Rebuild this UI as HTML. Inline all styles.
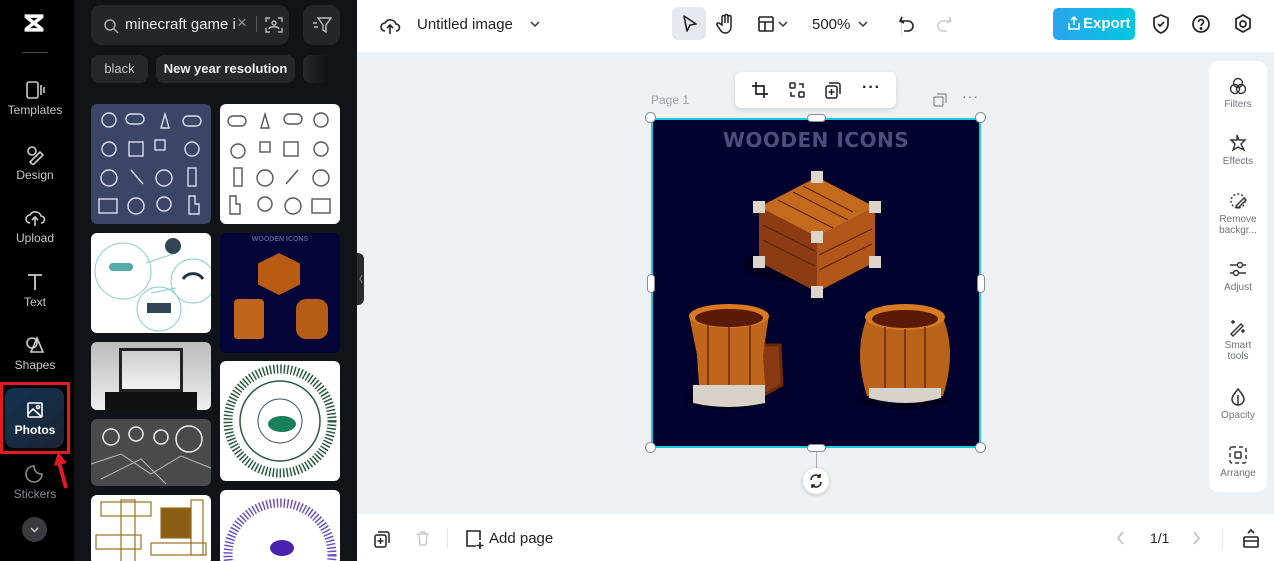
<!DOCTYPE html>
<html><head><meta charset="utf-8"><style>
*{box-sizing:border-box;margin:0;padding:0}
html,body{width:1274px;height:561px;overflow:hidden}
body{font-family:"Liberation Sans",sans-serif;background:#eef1f4;position:relative}
.abs{position:absolute}
#nav{left:0;top:0;width:74px;height:561px;background:#000;overflow:hidden}
.ni{position:absolute;left:0;width:70px;text-align:center;color:#c9c9cc;font-size:12px}
.ni svg{display:block;margin:0 auto 3px}
#panel{left:74px;top:0;width:283px;height:561px;background:#121316;overflow:hidden}
.th{position:absolute;border-radius:6px;overflow:hidden}
#top{left:357px;top:0;width:917px;height:52px;background:#fff}
#bot{left:357px;top:514px;width:917px;height:47px;background:#fff}
.rt{position:absolute;left:0;width:58px;text-align:center;font-size:10px;color:#70737a;line-height:11px}
.rt svg{display:block;margin:0 auto 3px}
.h{position:absolute;width:11px;height:11px;border-radius:50%;background:#fff;border:1px solid #8a8f96}
</style></head><body>
<div id="nav" class="abs">
 <svg class="abs" style="left:22px;top:13px" width="24" height="20" viewBox="0 0 28 22"><path d="M3 3h22M3 19h22M5 4l18 14M23 4L5 18" stroke="#fff" stroke-width="4" fill="none"/></svg>
 <div class="abs" style="left:22px;top:52px;width:26px;height:1px;background:#444"></div>
 <div class="ni" style="top:80px"><svg width="22" height="20" viewBox="0 0 22 20" fill="none" stroke="#ccc" stroke-width="1.6"><rect x="3" y="2" width="11" height="16" rx="2"/><path d="M17 5v10M20 7v6"/></svg>Templates</div>
 <div class="ni" style="top:145px"><svg width="22" height="20" viewBox="0 0 22 20" fill="none" stroke="#ccc" stroke-width="1.6"><circle cx="8" cy="6" r="4"/><path d="M6 17l10-10 3 3-10 10z"/></svg>Design</div>
 <div class="ni" style="top:208px"><svg width="22" height="20" viewBox="0 0 22 20" fill="none" stroke="#ccc" stroke-width="1.6"><path d="M6 15a4 4 0 010-8 6 6 0 0111 1 3.5 3.5 0 010 7M11 18v-8M8 12l3-3 3 3"/></svg>Upload</div>
 <div class="ni" style="top:272px"><svg width="22" height="20" viewBox="0 0 22 20" fill="none" stroke="#ccc" stroke-width="1.8"><path d="M4 3h14M11 3v15"/></svg>Text</div>
 <div class="ni" style="top:335px"><svg width="22" height="20" viewBox="0 0 22 20" fill="none" stroke="#ccc" stroke-width="1.6"><circle cx="8" cy="8" r="5"/><path d="M13 3l6 14H7z"/></svg>Shapes</div>
 <div class="abs" style="left:0;top:382px;width:70px;height:72px;border:3px solid #e01b24"></div>
 <div class="abs" style="left:5px;top:388px;width:59px;height:60px;border-radius:9px;background:linear-gradient(135deg,#123352,#1b2432)"></div>
 <div class="ni" style="top:400px;color:#fff;font-weight:bold"><svg width="22" height="20" viewBox="0 0 22 20" fill="none" stroke="#fff" stroke-width="1.6"><rect x="4" y="3" width="14" height="14" rx="1"/><path d="M4 14l5-5 9 8"/><circle cx="14" cy="7" r="1.5"/></svg>Photos</div>
 <svg class="abs" style="left:52px;top:452px" width="18" height="38" viewBox="0 0 18 38"><path d="M14 36L7 10" stroke="#e01b24" stroke-width="4"/><path d="M2 14L6 0l9 11z" fill="#e01b24"/></svg>
 <div class="ni" style="top:464px;color:#8a8a8f"><svg width="22" height="20" viewBox="0 0 22 20" fill="none" stroke="#8a8a8f" stroke-width="1.6"><path d="M18 10a8 8 0 11-8-8c0 5 3 8 8 8z"/></svg>Stickers</div>
 <div class="abs" style="left:22px;top:517px;width:25px;height:25px;border-radius:50%;background:#3a3b3f"><svg width="25" height="25" viewBox="0 0 25 25"><path d="M9 11l3.5 3.5L16 11" stroke="#ccc" stroke-width="1.5" fill="none"/></svg></div>
</div>
<div id="panel" class="abs">
 <div class="abs" style="left:17px;top:5px;width:198px;height:40px;border-radius:10px;background:#25262a">
  <svg class="abs" style="left:12px;top:13px" width="16" height="16" viewBox="0 0 16 16" fill="none" stroke="#aaa" stroke-width="1.5"><circle cx="7" cy="7" r="5"/><path d="M11 11l4 4"/></svg>
  <span class="abs" style="left:34px;top:11px;color:#e8e8ea;font-size:15px;white-space:nowrap">minecraft game i</span>
  <span class="abs" style="left:146px;top:8px;color:#999;font-size:17px">×</span>
  <span class="abs" style="left:165px;top:11px;width:1px;height:16px;background:#555"></span>
  <svg class="abs" style="left:174px;top:12px" width="18" height="16" viewBox="0 0 18 16" fill="none" stroke="#bbb" stroke-width="1.4"><path d="M1 5V1h4M13 1h4v4M17 11v4h-4M5 15H1v-4"/><circle cx="9" cy="6" r="2"/><path d="M4 12c1-3 9-3 10 0"/></svg>
 </div>
 <div class="abs" style="left:229px;top:5px;width:37px;height:40px;border-radius:10px;background:#25262a"><svg style="margin:11px 0 0 9px" width="20" height="18" viewBox="0 0 20 18" fill="none" stroke="#bbb" stroke-width="1.4"><path d="M6 2h13l-5 7v7l-3-2V9zM1 7h4M2 11h4"/></svg></div>
 <div class="abs" style="left:17px;top:55px;width:57px;height:28px;border-radius:8px;background:#26272b;color:#c8c8cb;font-size:13px;text-align:center;line-height:28px">black</div>
 <div class="abs" style="left:82px;top:55px;width:139px;height:28px;border-radius:8px;background:#26272b;color:#f0f0f2;font-size:13px;font-weight:bold;text-align:center;line-height:28px">New year resolution</div>
 <div class="abs" style="left:229px;top:55px;width:25px;height:28px;border-radius:8px 0 0 8px;background:linear-gradient(90deg,#26272b,#121316)"></div>
 <div class="th" style="left:17px;top:104px;width:120px;height:120px;background:#3b4566"></div>
 <div class="th" style="left:146px;top:104px;width:120px;height:120px;background:#fff"></div>
 <svg class="abs" style="left:17px;top:104px" width="250" height="120"><g fill="none" stroke="#dde" stroke-width="1.4"><circle cx="18" cy="16" r="7"/><rect x="35" y="10" width="18" height="10" rx="5"/><path d="M70 24l4-14 4 14z"/><rect x="92" y="12" width="18" height="10" rx="5"/><circle cx="18" cy="45" r="7"/><rect x="38" y="38" width="14" height="14"/><rect x="64" y="36" width="10" height="10"/><circle cx="101" cy="45" r="7"/><circle cx="18" cy="74" r="8"/><path d="M40 66l12 14"/><circle cx="73" cy="74" r="8"/><rect x="97" y="64" width="8" height="18"/><rect x="8" y="95" width="18" height="14"/><circle cx="45" cy="102" r="8"/><circle cx="73" cy="100" r="7"/><path d="M98 92h6v8h4v10h-10z"/></g><g fill="none" stroke="#555" stroke-width="1.4" transform="translate(129,0)"><rect x="8" y="12" width="18" height="10" rx="5"/><path d="M41 24l4-14 4 14z"/><rect x="64" y="10" width="18" height="10" rx="5"/><circle cx="101" cy="16" r="7"/><circle cx="18" cy="47" r="7"/><rect x="40" y="38" width="10" height="10"/><rect x="64" y="38" width="14" height="14"/><circle cx="101" cy="45" r="7"/><rect x="14" y="64" width="8" height="18"/><circle cx="45" cy="74" r="8"/><path d="M66 80l12-14"/><circle cx="101" cy="74" r="8"/><path d="M10 92h6v8h4v10H10z"/><circle cx="45" cy="100" r="7"/><circle cx="73" cy="102" r="8"/><rect x="92" y="95" width="18" height="14"/></g></svg>
 <div class="th" style="left:17px;top:233px;width:120px;height:100px;background:#fff"><svg width="120" height="100"><g fill="none" stroke="#8cc" stroke-width="1"><circle cx="32" cy="38" r="28"/><circle cx="102" cy="48" r="22"/><circle cx="68" cy="76" r="22"/><path d="M55 30l30-10M60 60l25-5"/></g><circle cx="82" cy="13" r="8" fill="#345"/><path d="M56 70h24v10H56z" fill="#345"/><path d="M92 46a12 12 0 0120 0" stroke="#234" stroke-width="3" fill="none"/><rect x="18" y="30" width="24" height="8" fill="#5aa" rx="4"/></svg></div>
 <div class="th" style="left:146px;top:233px;width:120px;height:120px;background:#05053a"><div style="color:#5a5c88;font-size:7px;font-weight:bold;text-align:center;margin-top:3px">WOODEN ICONS</div><div class="abs" style="left:38px;top:20px;width:42px;height:42px;background:#b85c14;clip-path:polygon(50% 0,100% 25%,100% 75%,50% 100%,0 75%,0 25%)"></div><div class="abs" style="left:14px;top:66px;width:30px;height:40px;background:#c0661a;border-radius:4px 4px 3px 3px"></div><div class="abs" style="left:76px;top:66px;width:32px;height:40px;background:#b35d17;border-radius:10px"></div></div>
 <div class="th" style="left:17px;top:342px;width:120px;height:68px;background:linear-gradient(#bbb,#eee)"><div class="abs" style="left:28px;top:6px;width:64px;height:44px;background:#222"></div><div class="abs" style="left:31px;top:9px;width:58px;height:38px;background:linear-gradient(#ccc,#f2f2f2)"></div><div class="abs" style="left:14px;top:50px;width:92px;height:18px;background:#111"></div></div>
 <div class="th" style="left:17px;top:419px;width:120px;height:67px;background:#4a4a4a"><svg width="120" height="67" fill="none" stroke="#eee" stroke-width="1.5"><circle cx="20" cy="18" r="8"/><circle cx="45" cy="15" r="7"/><circle cx="70" cy="18" r="7"/><circle cx="98" cy="20" r="13"/><path d="M0 45l30-10 30 20 30-18 30 12M10 60l40-20 25 25" stroke="#bbb" stroke-width="1"/></svg></div>
 <div class="th" style="left:17px;top:495px;width:120px;height:70px;background:#fff"><svg width="120" height="70" fill="none" stroke="#9a7024" stroke-width="1.2"><rect x="10" y="7" width="50" height="14"/><rect x="70" y="13" width="30" height="30" fill="#8a5e14"/><rect x="5" y="40" width="45" height="14"/><rect x="30" y="5" width="14" height="65"/><rect x="100" y="5" width="12" height="55"/><rect x="60" y="48" width="55" height="12"/></svg></div>
 <div class="th" style="left:146px;top:361px;width:120px;height:120px;background:#fff"><svg width="120" height="120"><circle cx="60" cy="60" r="52" fill="none" stroke="#2a5a40" stroke-width="9" stroke-dasharray="1.5 2"/><circle cx="60" cy="60" r="40" fill="none" stroke="#2a5a40" stroke-width="1.5"/><circle cx="60" cy="60" r="22" fill="#fff" stroke="#456" stroke-width="1"/><ellipse cx="62" cy="63" rx="14" ry="8" fill="#18805a"/></svg></div>
 <div class="th" style="left:146px;top:490px;width:120px;height:75px;background:#fff"><svg width="120" height="75"><circle cx="60" cy="65" r="52" fill="none" stroke="#6b52b8" stroke-width="9" stroke-dasharray="1.5 2"/><circle cx="60" cy="65" r="22" fill="#fff"/><ellipse cx="62" cy="58" rx="12" ry="8" fill="#4a22b0"/></svg></div>
</div>
<div class="abs" style="left:357px;top:253px;width:7px;height:52px;background:#2a2b2e;border-radius:0 6px 6px 0"><svg width="7" height="52"><path d="M5 22l-2 4 2 4" stroke="#888" fill="none"/></svg></div>
<div id="top" class="abs">
 <svg class="abs" style="left:22px;top:14px" width="22" height="22" viewBox="0 0 22 22" fill="none" stroke="#222" stroke-width="1.6"><path d="M6 17a4 4 0 010-8 6 6 0 0111 1 3.5 3.5 0 010 7M11 20v-8M8 14l3-3 3 3"/></svg>
 <span class="abs" style="left:60px;top:16px;font-size:15px;color:#222">Untitled image</span>
 <svg class="abs" style="left:172px;top:19px" width="12" height="10"><path d="M2 3l4 4 4-4" stroke="#333" stroke-width="1.5" fill="none"/></svg>
 <div class="abs" style="left:315px;top:7px;width:34px;height:33px;border-radius:6px;background:#e5e8ec"></div>
 <svg class="abs" style="left:324px;top:14px" width="18" height="20" viewBox="0 0 18 20"><path d="M3 2l12 8-6 1-3 6z" fill="none" stroke="#222" stroke-width="1.6" stroke-linejoin="round"/></svg>
 <svg class="abs" style="left:359px;top:13px" width="20" height="22" viewBox="0 0 20 22" fill="none" stroke="#222" stroke-width="1.5"><path d="M6 12V4a1.5 1.5 0 013 0v6V3a1.5 1.5 0 013 0v7V4a1.5 1.5 0 013 0v9c0 4-2 7-6 7-3 0-4-2-6-5l-2-3a1.5 1.5 0 012-2z"/></svg>
 <svg class="abs" style="left:400px;top:15px" width="18" height="18" viewBox="0 0 18 18" fill="none" stroke="#222" stroke-width="1.6"><rect x="2" y="2" width="14" height="14" rx="1"/><path d="M2 7h14M8 7v9"/></svg>
 <svg class="abs" style="left:420px;top:19px" width="12" height="10"><path d="M2 3l4 4 4-4" stroke="#333" stroke-width="1.5" fill="none"/></svg>
 <span class="abs" style="left:455px;top:16px;font-size:15px;color:#222">500%</span>
 <svg class="abs" style="left:500px;top:19px" width="12" height="10"><path d="M2 3l4 4 4-4" stroke="#333" stroke-width="1.5" fill="none"/></svg>
 <div class="abs" style="left:544px;top:15px;width:1px;height:20px;background:#ddd"></div>
 <svg class="abs" style="left:541px;top:14px" width="18" height="20" viewBox="0 0 18 20" fill="none" stroke="#222" stroke-width="1.6"><path d="M4 3L2 7l4 2M2 7h8a5 5 0 010 10H6"/></svg>
 <svg class="abs" style="left:578px;top:14px" width="18" height="20" viewBox="0 0 18 20" fill="none" stroke="#ccc" stroke-width="1.6"><path d="M14 3l2 4-4 2M16 7H8a5 5 0 000 10h4"/></svg>
 <div class="abs" style="left:696px;top:8px;width:82px;height:32px;border-radius:5px;background:linear-gradient(90deg,#2aa5ee,#00c7e0);color:#fff;font-size:15px;font-weight:bold;line-height:32px;padding-left:30px">Export</div>
 <svg class="abs" style="left:710px;top:15px" width="14" height="16" viewBox="0 0 14 16" fill="none" stroke="#fff" stroke-width="1.5"><path d="M7 10V2M4 5l3-3 3 3M2 8v6h10V8"/></svg>
 <svg class="abs" style="left:794px;top:13px" width="20" height="22" viewBox="0 0 20 22" fill="none" stroke="#222" stroke-width="1.7"><path d="M10 2l7 3v6c0 5-4 8-7 9-3-1-7-4-7-9V5z"/><path d="M7 11l2 2 4-4"/></svg>
 <svg class="abs" style="left:834px;top:14px" width="20" height="20" viewBox="0 0 20 20" fill="none" stroke="#222" stroke-width="1.7"><circle cx="10" cy="10" r="8"/><path d="M7.5 8a2.5 2.5 0 115 0c0 2-2.5 2-2.5 4"/><circle cx="10" cy="14.5" r=".6" fill="#222"/></svg>
 <svg class="abs" style="left:876px;top:13px" width="20" height="22" viewBox="0 0 20 22" fill="none" stroke="#222" stroke-width="1.7"><path d="M10 2l7 4v9l-7 4-7-4V6z"/><circle cx="10" cy="11" r="3"/></svg>
</div>
<span class="abs" style="left:651px;top:93px;font-size:12px;color:#9aa0a6">Page 1</span>
<svg class="abs" style="left:933px;top:93px" width="14" height="14" viewBox="0 0 14 14" fill="none" stroke="#888" stroke-width="1.2"><rect x="1" y="4" width="9" height="9" rx="1"/><path d="M4 1h9v9"/></svg>
<span class="abs" style="left:962px;top:88px;font-size:14px;color:#777;letter-spacing:1px">···</span>
<div class="abs" style="left:735px;top:72px;width:161px;height:36px;border-radius:7px;background:#fff;box-shadow:0 2px 6px rgba(0,0,0,.12)">
 <svg class="abs" style="left:16px;top:9px" width="18" height="18" viewBox="0 0 18 18" fill="none" stroke="#222" stroke-width="1.7"><path d="M5 1v12h12M1 5h12v12"/></svg>
 <svg class="abs" style="left:53px;top:9px" width="18" height="18" viewBox="0 0 18 18" fill="none" stroke="#222" stroke-width="1.5"><rect x="2" y="2" width="5" height="5" rx="1"/><rect x="11" y="11" width="5" height="5" rx="1"/><path d="M11 3h4v4M7 15H3v-4"/></svg>
 <svg class="abs" style="left:89px;top:9px" width="18" height="18" viewBox="0 0 18 18" fill="none" stroke="#222" stroke-width="1.5"><rect x="2" y="5" width="11" height="12" rx="2"/><path d="M5 2h9a2 2 0 012 2v9M7.5 8v6M4.5 11h6"/></svg>
 <span class="abs" style="left:127px;top:7px;font-size:16px;color:#222;font-weight:bold;letter-spacing:1px">···</span>
</div>
<div class="abs" style="left:651px;top:118px;width:330px;height:330px;background:#03012e;border:2px solid #1fc7dc;overflow:hidden">
 <div style="text-align:center;color:#4d4e7c;font-size:20px;font-weight:bold;margin-top:8px;letter-spacing:.5px;font-family:'DejaVu Sans',sans-serif">WOODEN ICONS</div>
 <svg class="abs" style="left:0;top:0" width="330" height="330">
  <ellipse cx="150" cy="145" rx="60" ry="18" fill="#00001c"/>
  <polygon points="164,57 222,87 164,117 106,87" fill="#c46a1c"/>
  <polygon points="106,87 164,117 164,172 106,142" fill="#8d3b14"/>
  <polygon points="164,117 222,87 222,142 164,172" fill="#b3561a"/>
  <g stroke="#5a2508" stroke-width="1.2"><path d="M125 80l55 28M140 72l55 28M150 66l50 26M110 105l52 26M110 120l52 26M166 135l53-26M166 150l53-26"/></g>
  <g fill="#ddd5cc"><rect x="158" y="51" width="12" height="12"/><rect x="100" y="81" width="12" height="12"/><rect x="216" y="81" width="12" height="12"/><rect x="158" y="111" width="12" height="12"/><rect x="100" y="136" width="12" height="12"/><rect x="216" y="136" width="12" height="12"/><rect x="158" y="166" width="12" height="12"/></g>
  <ellipse cx="73" cy="280" rx="40" ry="9" fill="#00001c"/>
  <path d="M103 225h24l2 40-18 10-4-10" fill="#8a3a12" stroke="#6a2a0a" stroke-width="3"/>
  <path d="M36 195h80l-6 40 2 30H46l-2-30z" fill="#c0661a"/>
  <ellipse cx="76" cy="196" rx="40" ry="12" fill="#d87a1f"/><ellipse cx="76" cy="198" rx="34" ry="9" fill="#5a1a08"/>
  <g stroke="#6a2a0a" stroke-width="1.5"><path d="M55 205v60M76 207v58M97 205v60"/></g>
  <path d="M40 265h72v18q-36 8-72 0z" fill="#d8d2c8"/>
  <ellipse cx="250" cy="280" rx="44" ry="9" fill="#00001c"/>
  <path d="M214 198q-14 34 0 78h76q14-44 0-78z" fill="#b8621a"/>
  <ellipse cx="252" cy="197" rx="40" ry="13" fill="#d87a1f"/><ellipse cx="252" cy="199" rx="33" ry="9" fill="#5a1a08"/>
  <g stroke="#6a2a0a" stroke-width="1.5"><path d="M232 207v65M252 209v63M272 207v65"/></g>
  <path d="M216 268h72v10q-36 10-72 0z" fill="#d8d2c8"/>
 </svg>
</div>
<div class="h" style="left:645px;top:112px"></div><div class="h" style="left:975px;top:112px"></div>
<div class="h" style="left:645px;top:442px"></div><div class="h" style="left:975px;top:442px"></div>
<div class="abs" style="left:807px;top:114px;width:19px;height:8px;border-radius:4px;background:#fff;border:1px solid #8a8f96"></div>
<div class="abs" style="left:807px;top:444px;width:19px;height:8px;border-radius:4px;background:#fff;border:1px solid #8a8f96"></div>
<div class="abs" style="left:647px;top:274px;width:8px;height:19px;border-radius:4px;background:#fff;border:1px solid #8a8f96"></div>
<div class="abs" style="left:977px;top:274px;width:8px;height:19px;border-radius:4px;background:#fff;border:1px solid #8a8f96"></div>
<div class="abs" style="left:816px;top:452px;width:1px;height:17px;background:#aab"></div>
<div class="abs" style="left:803px;top:468px;width:26px;height:26px;border-radius:50%;background:#fff;box-shadow:0 1px 4px rgba(0,0,0,.2)"><svg width="26" height="26" viewBox="0 0 26 26" fill="none" stroke="#222" stroke-width="1.6"><path d="M8 12a5 5 0 019-3M18 14a5 5 0 01-9 3M17 6v3h-3M9 20v-3h3"/></svg></div>
<div class="abs" style="left:1209px;top:61px;width:58px;height:431px;border-radius:10px;background:#fff">
 <div class="rt" style="top:15px"><svg width="20" height="20" viewBox="0 0 20 20" fill="none" stroke="#333" stroke-width="1.4"><circle cx="10" cy="7" r="4.5"/><circle cx="7" cy="13" r="4.5"/><circle cx="13" cy="13" r="4.5"/></svg>Filters</div>
 <div class="rt" style="top:72px"><svg width="20" height="20" viewBox="0 0 20 20" fill="none" stroke="#333" stroke-width="1.4"><path d="M9 2l2 5 6 0-4 4 3 6-6-3-5 3 2-6-4-4 6 0z"/></svg>Effects</div>
 <div class="rt" style="top:130px"><svg width="20" height="20" viewBox="0 0 20 20" fill="none" stroke="#333" stroke-width="1.4"><circle cx="10" cy="10" r="7" stroke-dasharray="2 2"/><path d="M8 15l8-8 2 2-8 8z"/></svg>Remove<br>backgr...</div>
 <div class="rt" style="top:198px"><svg width="20" height="20" viewBox="0 0 20 20" fill="none" stroke="#333" stroke-width="1.4"><path d="M2 6h16M2 14h16"/><circle cx="12" cy="6" r="2.5" fill="#fff"/><circle cx="8" cy="14" r="2.5" fill="#fff"/></svg>Adjust</div>
 <div class="rt" style="top:256px"><svg width="20" height="20" viewBox="0 0 20 20" fill="none" stroke="#333" stroke-width="1.4"><path d="M3 17l10-10 2 2L5 19zM5 3v4M3 5h4M15 12v4M13 14h4"/></svg>Smart<br>tools</div>
 <div class="rt" style="top:326px"><svg width="20" height="20" viewBox="0 0 20 20" fill="none" stroke="#333" stroke-width="1.5"><path d="M10 2c3 4 6 7 6 10a6 6 0 01-12 0c0-3 3-6 6-10z"/><path d="M10 8v10"/></svg>Opacity</div>
 <div class="rt" style="top:384px"><svg width="20" height="20" viewBox="0 0 20 20" fill="none" stroke="#333" stroke-width="1.5"><rect x="2" y="2" width="16" height="16" rx="2" stroke-dasharray="4 3"/><rect x="7" y="7" width="6" height="6" rx="1"/></svg>Arrange</div>
</div>
<div id="bot" class="abs">
 <svg class="abs" style="left:16px;top:16px" width="18" height="18" viewBox="0 0 18 18" fill="none" stroke="#222" stroke-width="1.5"><rect x="2" y="5" width="11" height="12" rx="2"/><path d="M5 2h9a2 2 0 012 2v9M7.5 8v6M4.5 11h6"/></svg>
 <svg class="abs" style="left:57px;top:15px" width="18" height="18" viewBox="0 0 18 18" fill="none" stroke="#ccc" stroke-width="1.5"><path d="M3 5h12M7 5V3h4v2M5 5l1 11h6l1-11"/></svg>
 <div class="abs" style="left:90px;top:14px;width:1px;height:20px;background:#e5e5e5"></div>
 <svg class="abs" style="left:107px;top:14px" width="20" height="22" viewBox="0 0 20 22" fill="none" stroke="#222" stroke-width="1.6"><path d="M12 18H3V3h13v9"/><path d="M16 14v7M12.5 17.5h7"/></svg>
 <span class="abs" style="left:132px;top:16px;font-size:15px;color:#222">Add page</span>
 <svg class="abs" style="left:758px;top:16px" width="12" height="16"><path d="M8 2L3 8l5 6" stroke="#bbb" stroke-width="1.5" fill="none"/></svg>
 <span class="abs" style="left:793px;top:16px;font-size:14px;color:#222">1/1</span>
 <svg class="abs" style="left:833px;top:16px" width="12" height="16"><path d="M4 2l5 6-5 6" stroke="#bbb" stroke-width="1.5" fill="none"/></svg>
 <div class="abs" style="left:865px;top:14px;width:1px;height:20px;background:#e5e5e5"></div>
 <svg class="abs" style="left:885px;top:13px" width="18" height="22" viewBox="0 0 18 22" fill="none" stroke="#222" stroke-width="1.6"><rect x="2" y="10" width="14" height="10" rx="1"/><path d="M2 14h14M6 6l3-3 3 3"/></svg>
</div>
</body></html>
